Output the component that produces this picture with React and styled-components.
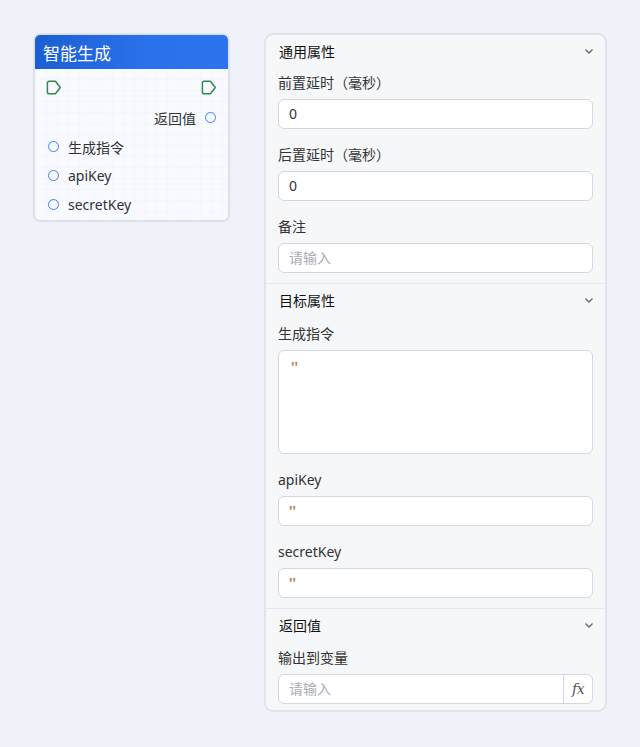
import React from 'react'
import styled, { createGlobalStyle } from 'styled-components'

const GlobalStyle = createGlobalStyle`
  html, body {
    margin: 0;
    padding: 0;
    background: #eff2f9;
  }
  body {
    font-family: "Noto Sans", "Noto Sans CJK SC", sans-serif;
    font-size: 14px;
    color: #333;
  }
`

const Page = styled.div`
  display: flex;
  align-items: flex-start;
  gap: 34px;
  padding: 33px 0 0 33px;
  min-height: 714px;
`

/* ---------- node card ---------- */

const Node = styled.div`
  width: 197px;
  box-sizing: border-box;
  border: 2px solid #dde1ea;
  border-radius: 7px;
  overflow: hidden;
  background-color: #f8faff;
  background-image:
    linear-gradient(rgba(60, 90, 160, 0.02) 1px, transparent 1px),
    linear-gradient(90deg, rgba(60, 90, 160, 0.02) 1px, transparent 1px);
  background-size: 11px 11px;
`

const NodeHeader = styled.div`
  height: 34px;
  display: flex;
  align-items: center;
  padding: 0 8px;
  background: linear-gradient(90deg, #1c5fd3 0%, #2a72ec 60%, #2b74ee 100%);
  color: #fff;
  font-size: 17px;
  font-family: "Noto Sans CJK SC", sans-serif;
`

const NodeBody = styled.div`
  padding: 2px 0 1px;
`

const FlowRow = styled.div`
  height: 32px;
  display: flex;
  align-items: center;
  justify-content: space-between;
  padding: 0 11px 0 11px;
`

const PortRow = styled.div`
  height: 29px;
  display: flex;
  align-items: center;
  gap: 9px;
  padding: 0 12px 0 13px;
  justify-content: ${({ $out }) => ($out ? 'flex-end' : 'flex-start')};
  font-size: 14px;
  color: #333;
`

const Port = styled.span`
  width: 11px;
  height: 11px;
  box-sizing: border-box;
  border-radius: 50%;
  border: 1.5px solid #3f82f1;
  flex-shrink: 0;
`

const FlowIcon = () => (
  <svg width="16" height="15" viewBox="0 0 16 15">
    <path
      d="M3.2 1.2 H9.4 L14.3 7.5 L9.4 13.8 H3.2 A1.8 1.8 0 0 1 1.4 12 V3 A1.8 1.8 0 0 1 3.2 1.2 Z"
      fill="none"
      stroke="#2f8c4c"
      strokeWidth="1.5"
      strokeLinejoin="round"
    />
  </svg>
)

/* ---------- property panel ---------- */

const Panel = styled.div`
  width: 343px;
  box-sizing: border-box;
  border: 2px solid #e0e3eb;
  border-radius: 9px;
  background: #f6f7f9;
`

const Section = styled.div`
  border-top: ${({ $first }) => ($first ? 'none' : '1px solid #e6e8ee')};
`

const SectionHeader = styled.div`
  height: 32px;
  display: flex;
  align-items: center;
  justify-content: space-between;
  padding: 0 11px 0 13px;
  font-size: 14px;
  color: #111;
  font-family: "Noto Sans CJK SC", sans-serif;
`

const SectionBody = styled.div`
  padding: ${({ $top }) => $top}px 12px ${({ $bottom }) => $bottom}px;
  display: flex;
  flex-direction: column;
  gap: 16px;
`

const Field = styled.div`
  display: flex;
  flex-direction: column;
  gap: 6px;
`

const Label = styled.div`
  line-height: 20px;
  font-size: 14px;
  color: #333;
`

const InputBox = styled.div`
  height: ${({ $h }) => $h || 30}px;
  box-sizing: border-box;
  background: #fff;
  border: 1px solid #d4d7e1;
  border-radius: 6px;
  display: flex;
  align-items: ${({ $multi }) => ($multi ? 'flex-start' : 'center')};
  overflow: hidden;
`

const Value = styled.span`
  flex: 1;
  padding: ${({ $multi }) => ($multi ? '6px 12px' : '0 10px')};
  font-size: 14px;
  line-height: 20px;
  font-weight: ${({ $kind }) => ($kind === 'string' ? 600 : 400)};
  color: ${({ $kind }) =>
    $kind === 'placeholder' ? '#a8abb3' : $kind === 'string' ? '#b7772f' : '#333'};
`

const Addon = styled.span`
  width: 28px;
  align-self: stretch;
  border-left: 1px solid #d4d7e1;
  display: flex;
  align-items: center;
  justify-content: center;
  font-family: "DejaVu Serif", serif;
  font-style: italic;
  font-size: 14px;
  color: #555;
  letter-spacing: -0.5px;
`

const Chevron = () => (
  <svg width="10" height="7" viewBox="0 0 10 7">
    <polyline points="1.5,1.5 5,5 8.5,1.5" fill="none" stroke="#666" strokeWidth="1.3" />
  </svg>
)

const sections = [
  {
    title: '通用属性',
    top: 6,
    bottom: 10,
    fields: [
      { label: '前置延时（毫秒）', value: '0' },
      { label: '后置延时（毫秒）', value: '0' },
      { label: '备注', value: '请输入', kind: 'placeholder' },
    ],
  },
  {
    title: '目标属性',
    top: 8,
    bottom: 10,
    fields: [
      { label: '生成指令', value: "''", kind: 'string', multi: true, h: 104 },
      { label: 'apiKey', value: "''", kind: 'string' },
      { label: 'secretKey', value: "''", kind: 'string' },
    ],
  },
  {
    title: '返回值',
    top: 7,
    bottom: 6,
    fields: [{ label: '输出到变量', value: '请输入', kind: 'placeholder', fx: true }],
  },
]

const App = () => {
  return (
    <Page>
      <GlobalStyle />
      <Node>
        <NodeHeader>智能生成</NodeHeader>
        <NodeBody>
          <FlowRow>
            <FlowIcon />
            <FlowIcon />
          </FlowRow>
          <PortRow $out>
            返回值
            <Port />
          </PortRow>
          {['生成指令', 'apiKey', 'secretKey'].map((name) => (
            <PortRow key={name}>
              <Port />
              {name}
            </PortRow>
          ))}
        </NodeBody>
      </Node>

      <Panel>
        {sections.map((s, i) => (
          <Section key={s.title} $first={i === 0}>
            <SectionHeader>
              {s.title}
              <Chevron />
            </SectionHeader>
            <SectionBody $top={s.top} $bottom={s.bottom}>
              {s.fields.map((f) => (
                <Field key={f.label}>
                  <Label>{f.label}</Label>
                  <InputBox $h={f.h} $multi={f.multi}>
                    <Value $kind={f.kind} $multi={f.multi}>
                      {f.value}
                    </Value>
                    {f.fx && <Addon>fx</Addon>}
                  </InputBox>
                </Field>
              ))}
            </SectionBody>
          </Section>
        ))}
      </Panel>
    </Page>
  )
}

export default App
